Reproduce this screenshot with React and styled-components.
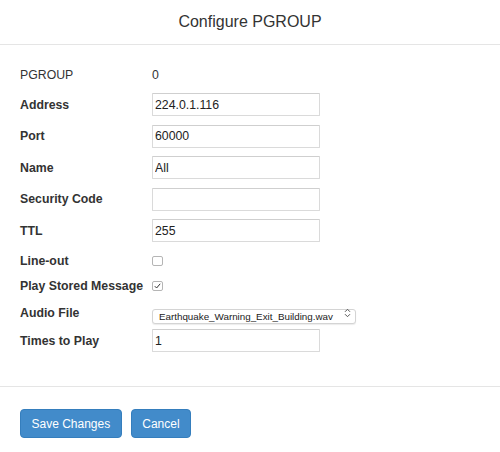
import styled, { createGlobalStyle } from 'styled-components';

const GlobalStyle = createGlobalStyle`
  html, body {
    margin: 0;
    padding: 0;
    background: #fff;
  }
  body {
    font-family: "Liberation Sans", Arial, sans-serif;
    color: #333;
  }
`;

const Modal = styled.div`
  width: 500px;
  height: 452px;
  display: flex;
  flex-direction: column;
  background: #fff;
`;

const Header = styled.div`
  height: 44px;
  display: flex;
  align-items: center;
  justify-content: center;
  border-bottom: 1px solid #e5e5e5;
`;

const Title = styled.h4`
  margin: 0;
  font-size: 16px;
  font-weight: normal;
  color: #333;
`;

const Body = styled.div`
  display: flex;
  flex-direction: column;
  padding: 20px 20px 34px;
`;

const Row = styled.div`
  display: grid;
  grid-template-columns: 132px 1fr;
  align-items: center;
  height: ${(p) => p.$h || 23}px;
  margin-top: ${(p) => p.$mt || 0}px;
`;

const Label = styled.label`
  font-size: 12.3px;
  font-weight: ${(p) => (p.$plain ? 'normal' : 'bold')};
  color: #333;
  white-space: nowrap;
`;

const Static = styled.span`
  font-size: 12.3px;
  color: #333;
`;

const Input = styled.input`
  box-sizing: border-box;
  width: 168px;
  height: 23px;
  padding: 0 2px;
  border: 1px solid #dadada;
  border-top-color: #cfcfcf;
  border-radius: 1px;
  font-family: inherit;
  font-size: 12.3px;
  color: #222;
  outline: none;
  background: #fff;
`;

const Check = styled.span`
  box-sizing: border-box;
  width: 11px;
  height: 10px;
  border: 1px solid #b5b5b5;
  border-radius: 2px;
  background: #fff;
  display: flex;
  align-items: center;
  justify-content: center;
`;

const SelectWrap = styled.div`
  position: relative;
  width: 204px;
  height: 15px;
`;

const Select = styled.select`
  box-sizing: border-box;
  appearance: none;
  width: 100%;
  height: 100%;
  padding: 0 16px 0 6px;
  border: 1px solid #d4d4d4;
  border-radius: 3px;
  background: #fff;
  box-shadow: 0 1px 1px rgba(0, 0, 0, 0.08);
  font-family: inherit;
  font-size: 9.8px;
  color: #222;
  outline: none;
`;

const Arrows = styled.svg`
  position: absolute;
  right: 5px;
  top: 2.5px;
  pointer-events: none;
`;

const Footer = styled.div`
  border-top: 1px solid #e5e5e5;
  padding: 22px 20px 0;
  display: flex;
  gap: 9px;
`;

const Button = styled.button`
  box-sizing: border-box;
  height: 29px;
  padding: 0 10.5px;
  border: 1px solid #357ebd;
  border-radius: 4px;
  background: #428bca;
  color: #fff;
  font-family: inherit;
  font-size: 12px;
  cursor: pointer;
`;

function CheckBox({ checked }) {
  return (
    <Check>
      {checked && (
        <svg width="7" height="6" viewBox="0 0 7 6">
          <path d="M0.8 3.2 L2.6 5 L6.2 0.8" fill="none" stroke="#333" strokeWidth="1" />
        </svg>
      )}
    </Check>
  );
}

export default function App() {
  return (
    <>
      <GlobalStyle />
      <Modal>
        <Header>
          <Title>Configure PGROUP</Title>
        </Header>
        <Body>
          <Row $h={20}>
            <Label $plain>PGROUP</Label>
            <Static>0</Static>
          </Row>
          <Row $mt={8}>
            <Label>Address</Label>
            <Input defaultValue="224.0.1.116" />
          </Row>
          <Row $mt={8.5}>
            <Label>Port</Label>
            <Input defaultValue="60000" />
          </Row>
          <Row $mt={8.5}>
            <Label>Name</Label>
            <Input defaultValue="All" />
          </Row>
          <Row $mt={8.5}>
            <Label>Security Code</Label>
            <Input defaultValue="" />
          </Row>
          <Row $mt={8.5}>
            <Label>TTL</Label>
            <Input defaultValue="255" />
          </Row>
          <Row $h={18} $mt={10}>
            <Label>Line-out</Label>
            <CheckBox />
          </Row>
          <Row $h={18} $mt={7}>
            <Label>Play Stored Message</Label>
            <CheckBox checked />
          </Row>
          <Row $h={16} $mt={10}>
            <Label>Audio File</Label>
            <SelectWrap>
              <Select defaultValue="eq">
                <option value="eq">Earthquake_Warning_Exit_Building.wav</option>
              </Select>
              <Arrows width="7" height="10" viewBox="0 0 7 10">
                <path d="M1 3.8 L3.5 1.3 L6 3.8 M1 6.2 L3.5 8.7 L6 6.2" fill="none" stroke="#555" strokeWidth="1" />
              </Arrows>
            </SelectWrap>
          </Row>
          <Row $mt={8}>
            <Label>Times to Play</Label>
            <Input defaultValue="1" />
          </Row>
        </Body>
        <Footer>
          <Button>Save Changes</Button>
          <Button>Cancel</Button>
        </Footer>
      </Modal>
    </>
  );
}
